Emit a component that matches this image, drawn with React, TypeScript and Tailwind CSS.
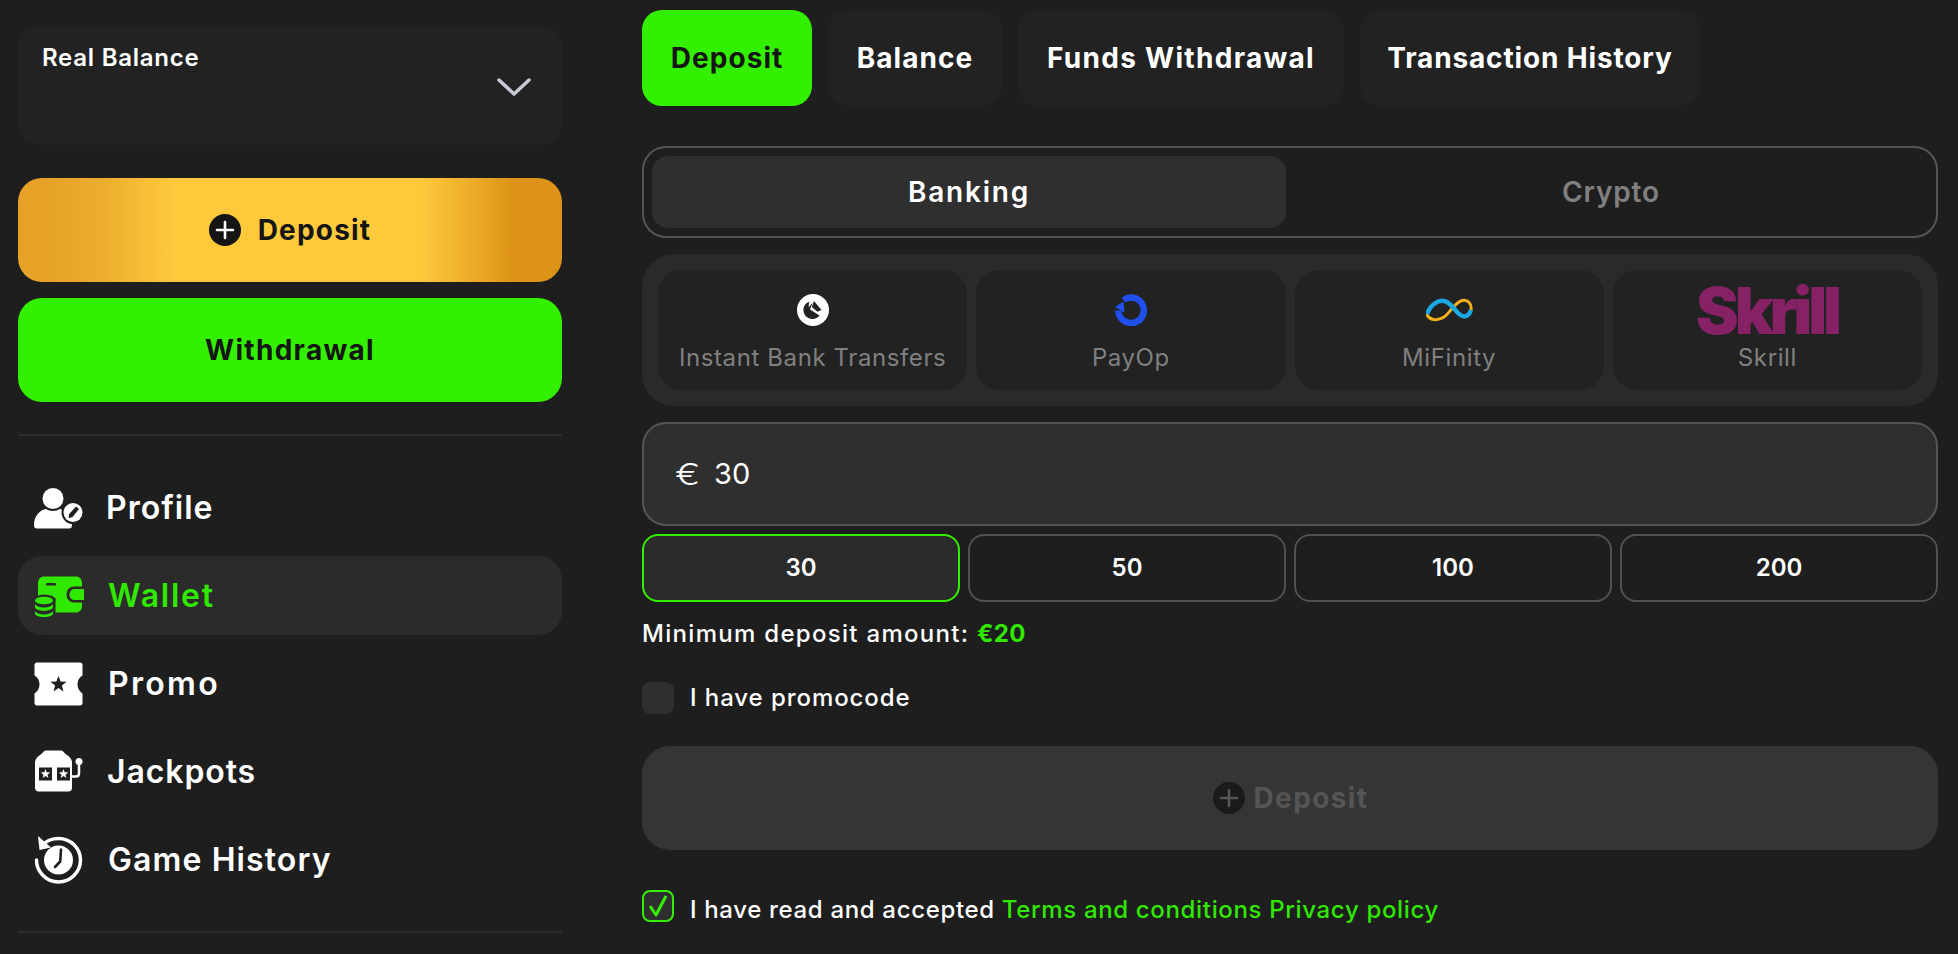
import React from "react";

const font = { fontFamily: "Inter, 'Noto Sans', sans-serif" };

function Star({ cx, cy, r, fill }: { cx: number; cy: number; r: number; fill: string }) {
  const pts: string[] = [];
  for (let i = 0; i < 10; i++) {
    const rad = i % 2 === 0 ? r : r * 0.42;
    const a = -Math.PI / 2 + (i * Math.PI) / 5;
    pts.push(`${cx + rad * Math.cos(a)},${cy + rad * Math.sin(a)}`);
  }
  return <polygon points={pts.join(" ")} fill={fill} />;
}

const DARK = "#1e1e1e";

function ProfileIcon() {
  return (
    <svg width="50" height="48" viewBox="0 0 50 48">
      <circle cx="19" cy="14.500" r="10.500" fill="#fff" />
      <path d="M0 41c0-10 7-15.500 12-16 4 2.500 10 2.500 14 0 6 .5 12 6 12 16 0 2.500-1 3.500-3 3.500H3c-2 0-3-1-3-3.500z" fill="#fff" />
      <circle cx="39" cy="28.500" r="11.500" fill={DARK} />
      <circle cx="39" cy="28.500" r="9.500" fill="#fff" />
      <path d="M42 22.500l3 2.500-6.500 8-3.800 1.300.3-4z" fill={DARK} />
    </svg>
  );
}

function WalletIcon() {
  const g = "#30e800";
  const bg = "#2b2b2b";
  return (
    <svg width="50" height="48" viewBox="0 0 50 48">
      <path d="M10 4.500h32c3.300 0 6 2.700 6 6v24c0 3.300-2.700 6-6 6H10c-3.300 0-6-2.700-6-6v-24c0-3.300 2.700-6 6-6z" fill={g} />
      <rect x="12" y="11" width="10" height="2.500" rx="1.200" fill={bg} />
      <path d="M50 14.500H40c-4 0-7.500 3.200-7.500 8s3.500 8 7.500 8h10z" fill={bg} />
      <path d="M50 17H40.500c-3 0-5 2.500-5 5.500s2 5.500 5 5.500H50z" fill={g} />
      <ellipse cx="10.500" cy="40" rx="11" ry="6" fill={bg} />
      <rect x="-0.500" y="26" width="22" height="14" fill={bg} />
      <ellipse cx="10.500" cy="28" rx="11" ry="5.500" fill={bg} />
      <ellipse cx="10" cy="28.500" rx="9" ry="3.800" fill={g} />
      <path d="M1 32c1 2 5 3.500 9 3.500s8-1.500 9-3.500v3c0 2-4 3.800-9 3.800S1 37 1 35z" fill={g} />
      <path d="M1 39c1 2 5 3.500 9 3.500s8-1.500 9-3.500v2.500c0 2-4 3.500-9 3.500s-9-1.500-9-3.500z" fill={g} />
    </svg>
  );
}

function PromoIcon() {
  return (
    <svg width="50" height="48" viewBox="0 0 50 48">
      <path d="M3 2.500h43c1.500 0 2.500 1 2.500 2.500v10.500c-3 1.500-5 5-5 9s2 7 5 9V43c0 1.500-1 2.500-2.500 2.500H3c-1.500 0-2.500-1-2.500-2.500V33.500c3-2 5-5 5-9s-2-7.500-5-9V5c0-1.500 1-2.500 2.500-2.500z" fill="#fff" />
      <Star cx={24.500} cy={24.500} r={8.500} fill={DARK} />
    </svg>
  );
}

function JackpotIcon() {
  return (
    <svg width="50" height="48" viewBox="0 0 50 48">
      <path d="M12 2.500h15c1.500 0 3 1.500 4 3l4 3c2 2 3 4 3 6V40c0 2-1.500 3.500-3.500 3.500H4.500C2.500 43.500 1 42 1 40V14.500c0-2 1-4 3-6l4-3c1-1.500 2.500-3 4-3z" fill="#fff" />
      <rect x="5" y="19.500" width="13" height="13" fill={DARK} />
      <rect x="23" y="19.500" width="13" height="13" fill={DARK} />
      <Star cx={11.500} cy={26} r={5} fill="#fff" />
      <Star cx={29.500} cy={26} r={5} fill="#fff" />
      <circle cx="45" cy="13.500" r="3.500" fill="#fff" />
      <path d="M45 15v10.500c0 2-1 3-3 3h-4" fill="none" stroke="#fff" strokeWidth="2.500" />
    </svg>
  );
}

function HistoryIcon() {
  return (
    <svg width="50" height="48" viewBox="0 0 50 48">
      <path d="M9 8.500C13 4.500 18.500 2.500 24.500 2.500c12 0 22 9.500 22 21.500s-10 22-22 22-22-10-22-22" fill="none" stroke="#fff" strokeWidth="3.500" strokeLinecap="round" />
      <path d="M4 0l1.500 14L17 11.500z" fill="#fff" />
      <circle cx="24.500" cy="24" r="14.500" fill="#fff" />
      <path d="M27 13.500l-.8 12-5.200 5.500" fill="none" stroke={DARK} strokeWidth="2.600" strokeLinecap="round" strokeLinejoin="round" />
    </svg>
  );
}

function PlusCircle({ bg, fg, size }: { bg: string; fg: string; size: number }) {
  return (
    <svg width={size} height={size} viewBox="0 0 32 32" className="shrink-0">
      <circle cx="16" cy="16" r="16" fill={bg} />
      <path d="M16 8v16M8 16h16" stroke={fg} strokeWidth="2.600" strokeLinecap="round" />
    </svg>
  );
}

function InstantIcon() {
  return (
    <svg width="32" height="32" viewBox="0 0 32 32">
      <circle cx="16" cy="16" r="16" fill="#fff" />
      <path d="M12.500 7.500c-4 1.500-6.500 5-6 9.500 .5 4.500 4 7.500 8.500 8 3 .2 6-1.200 7.500-3.500L13 15.500l2.500-6.500c-1 .5-2.800 2.500-3.500 4.500-.5-2-.2-4.500.5-6z" fill="#222" />
      <path d="M17 7l7.500 9-4 1.800L14.800 13z" fill="#222" />
    </svg>
  );
}

function PayOpIcon() {
  return (
    <svg width="32" height="32" viewBox="0 0 32 32">
      <path d="M8.500 6A12.750 12.750 0 1 1 3.300 16.500" fill="none" stroke="#1f50ee" strokeWidth="6.500" />
      <path d="M0 13l8.500-5.500L9.500 18.500z" fill="#1f50ee" />
    </svg>
  );
}

function MiFinityIcon() {
  return (
    <svg width="47" height="24" viewBox="0 -1 47 24">
      <path d="M0.500 15C4 22 12 22 18 18 24 14 28 4 36 1.500 42 0 46 5 45 11" fill="none" stroke="#f4b01c" strokeWidth="3" />
      <path d="M1 15C4 6 12 1 18 2 24 3 27 9 32 14 36 18 42 20 45 11" fill="none" stroke="#1aa9e2" strokeWidth="4.500" />
    </svg>
  );
}

function SkrillLogo() {
  return (
    <svg width="146" height="48" viewBox="0 0 146 48" className="overflow-visible">
      <text x="73" y="48" textAnchor="middle" fill="#862165" fontSize="64" fontWeight="900" letterSpacing="-4" fontFamily="Inter, sans-serif">
        Skrill
      </text>
    </svg>
  );
}

const navItems = [
  { label: "Profile", Icon: ProfileIcon, x: "ml-[22px] tracking-[1px]" },
  { label: "Wallet", Icon: WalletIcon, active: true, x: "ml-[24px] tracking-[1.750px]" },
  { label: "Promo", Icon: PromoIcon, x: "ml-[24px] tracking-[2.300px]" },
  { label: "Jackpots", Icon: JackpotIcon, x: "ml-[23px] tracking-[0.900px]" },
  { label: "Game History", Icon: HistoryIcon, x: "ml-[24px] tracking-[1.100px]" },
];

const tabs = [
  { label: "Deposit", w: "w-[170px] tracking-[1.070px]", active: true },
  { label: "Balance", w: "w-[174px] tracking-[1.070px]" },
  { label: "Funds Withdrawal", w: "w-[326px] tracking-[1.300px]" },
  { label: "Transaction History", w: "w-[340px] tracking-[0.850px]" },
];

function Method({ label, children }: { label: string; children: React.ReactNode }) {
  return (
    <div className="flex h-[120px] flex-1 flex-col items-center rounded-[24px] bg-[#222222] pt-4">
      <div className="flex h-12 items-center justify-center">{children}</div>
      <div className="mt-3 text-[24px] leading-6 tracking-[0.6px] text-[#808080]">{label}</div>
    </div>
  );
}

export default function App() {
  return (
    <div className="flex min-h-screen overflow-hidden bg-[#1e1e1e] pl-[18px] text-white" style={font}>
      <aside className="w-[544px] shrink-0 pt-[26px]">
        <div className="relative h-[119px] rounded-[20px] bg-[#222222] pl-6 pt-[19px]">
          <div className="text-[24px] font-semibold leading-[26px] tracking-[0.75px]">Real Balance</div>
          <svg width="36" height="20" viewBox="0 0 36 20" className="absolute left-[478px] top-[51px]">
            <path d="M3 3l15 14L33 3" fill="none" stroke="#c8cbd6" strokeWidth="3.500" strokeLinecap="round" strokeLinejoin="round" />
          </svg>
        </div>
        <button className="mt-[33px] flex h-[104px] w-full items-center justify-center gap-[17px] rounded-[24px] bg-[linear-gradient(90deg,#e5a226_5%,#ecac2e_15%,#f5bb35_22%,#ffc93c_29%,#ffc93c_74%,#dd9418_91%,#dc9318_100%)] text-[#151515]">
          <PlusCircle bg="#151515" fg="#fff" size={32} />
          <span className="text-[28px] font-bold tracking-[1.2px]">Deposit</span>
        </button>
        <button className="mt-4 flex h-[104px] w-full items-center justify-center rounded-[24px] bg-[#33f000] text-[28px] font-bold tracking-[1.3px] text-[#151515]">
          Withdrawal
        </button>
        <div className="mt-8 h-0.5 bg-[#2c2c2c]" />
        <nav className="mt-8 flex flex-col gap-[9px]">
          {navItems.map(({ label, Icon, active, x }) => (
            <div
              key={label}
              className={active ? "flex h-[79px] items-center rounded-[24px] bg-[#2b2b2b] pl-4 text-[#30e800]" : "flex h-[79px] items-center rounded-[24px] pl-4"}
            >
              <Icon />
              <span className={`${x} text-[32px] font-semibold`}>{label}</span>
            </div>
          ))}
        </nav>
        <div className="mt-8 h-0.5 bg-[#2c2c2c]" />
      </aside>

      <main className="ml-[80px] w-[1296px] shrink-0 pt-[10px]">
        <div className="flex h-24 gap-4">
          {tabs.map((t) => (
            <div
              key={t.label}
              className={`${t.w} flex items-center justify-center rounded-[20px] text-[28px] font-bold ${t.active ? "bg-[#33f000] text-[#151515]" : "bg-[#222222] text-white"}`}
            >
              {t.label}
            </div>
          ))}
        </div>

        <div className="mt-10 flex h-[92px] rounded-[24px] border-2 border-[#555555] p-2">
          <div className="flex w-[634px] items-center justify-center rounded-[16px] bg-[#2f2f2f] text-[28px] font-semibold tracking-[1.8px]">Banking</div>
          <div className="flex flex-1 items-center justify-center pl-2 text-[28px] font-semibold tracking-[0.85px] text-[#808080]">Crypto</div>
        </div>

        <div className="mt-4 flex h-[152px] gap-[9px] rounded-[32px] bg-[#2a2a2a] p-4">
          <Method label="Instant Bank Transfers"><InstantIcon /></Method>
          <Method label="PayOp"><PayOpIcon /></Method>
          <Method label="MiFinity"><MiFinityIcon /></Method>
          <Method label="Skrill"><SkrillLogo /></Method>
        </div>

        <div className="mt-4 flex h-[104px] items-center rounded-[24px] border-2 border-[#555555] bg-[#2f2f2f] pl-[31px] text-[29px]">
          <span className="inline-block w-[21px] origin-left scale-x-125 text-[30px] font-light">€</span>
          <span className="ml-[18px]">30</span>
        </div>

        <div className="mt-2 grid h-[68px] grid-cols-4 gap-2">
          {["30", "50", "100", "200"].map((a, i) => (
            <div
              key={a}
              className={i === 0 ? "flex items-center justify-center rounded-[16px] border-2 border-[#33f000] bg-[#2b2b2b] text-[24px] font-semibold" : "flex items-center justify-center rounded-[16px] border-2 border-[#505050] text-[24px] font-semibold"}
            >
              {a}
            </div>
          ))}
        </div>

        <div className="mt-4 text-[24px] font-medium leading-8 tracking-[1.3px]">
          Minimum deposit amount: <span className="font-bold tracking-[0.3px] text-[#30e800]">€20</span>
        </div>

        <div className="mt-8 flex h-8 items-center">
          <div className="h-8 w-8 rounded-lg bg-[#2f2f2f]" />
          <span className="ml-4 text-[24px] font-medium tracking-[0.93px]">I have promocode</span>
        </div>

        <button className="mt-8 flex h-[104px] w-full items-center justify-center gap-2 rounded-[28px] bg-[#353535] pl-[2px] text-[28px] font-bold tracking-[1.4px] text-[#555555]">
          <PlusCircle bg="#1a1a1a" fg="#555555" size={32} />
          <span>Deposit</span>
        </button>

        <div className="mt-10 flex h-8 items-center">
          <div className="flex h-8 w-8 items-center justify-center rounded-lg border-2 border-[#33f000] bg-[#2f2f2f]">
            <svg width="22" height="24" viewBox="0 0 22 24">
              <path d="M3 12l6 9L19 2" fill="none" stroke="#33f000" strokeWidth="3" strokeLinejoin="round" />
            </svg>
          </div>
          <span className="ml-4 pt-2 text-[24px] font-medium tracking-[0.66px]">
            I have read and accepted <span className="text-[#30e800]">Terms and conditions Privacy policy</span>
          </span>
        </div>
      </main>
    </div>
  );
}
